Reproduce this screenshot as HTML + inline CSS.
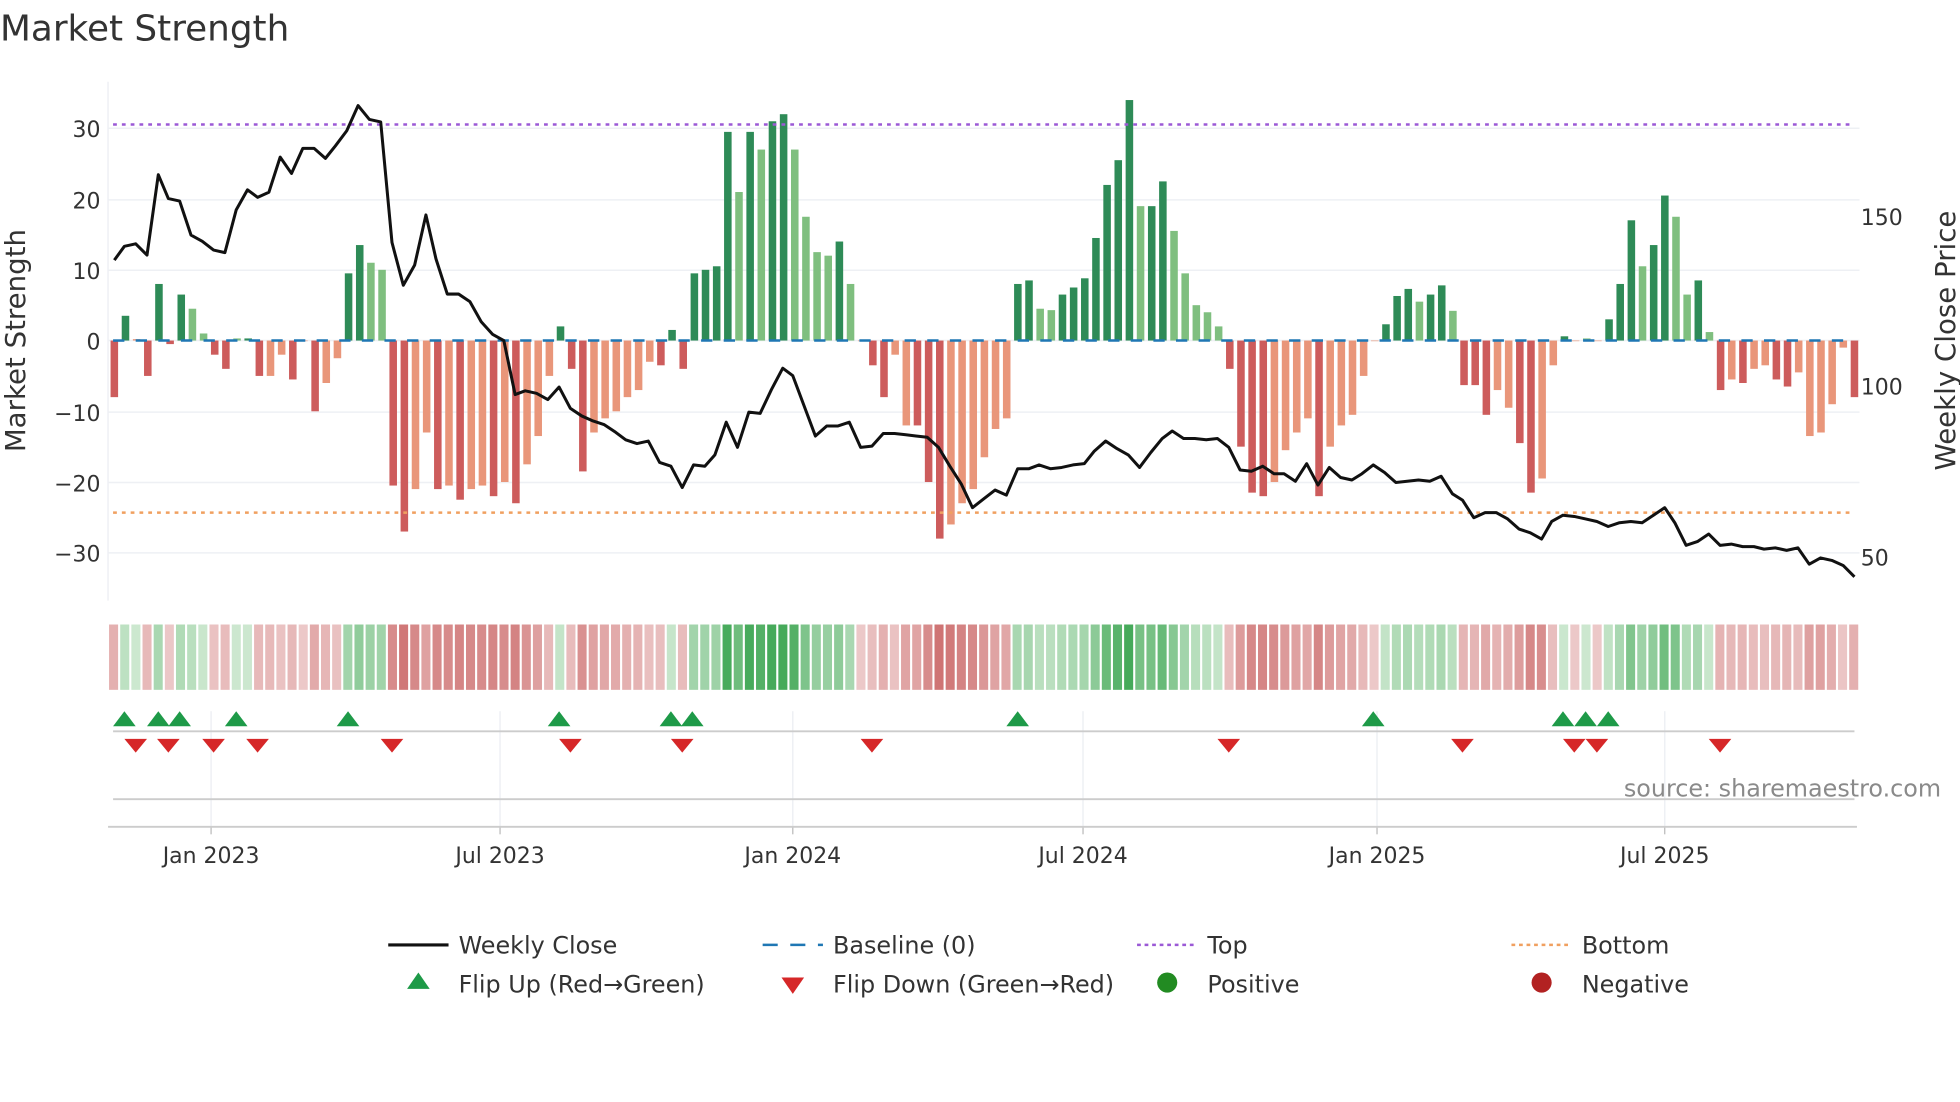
<!DOCTYPE html>
<html><head><meta charset="utf-8"><style>
html,body{margin:0;padding:0;background:#fff;}
svg{display:block;}
text{font-family:"DejaVu Sans","Liberation Sans",sans-serif;fill:#333;}
</style></head><body>
<svg id="s" width="1960" height="1102" viewBox="0 0 1560 877" xmlns="http://www.w3.org/2000/svg">
<rect width="1560" height="877" fill="#fff"/>
<text x="0" y="32" font-size="28.5" fill="#333">Market Strength</text>
<g id="grid"></g>
<g id="bars"></g>
<g id="strip"></g>
<line x1="90" y1="99" x2="1476" y2="99" stroke="#9b59d6" stroke-width="2" stroke-dasharray="3,4"/>
<line x1="90" y1="408" x2="1476" y2="408" stroke="#f0a060" stroke-width="2" stroke-dasharray="3,4"/>
<line x1="90" y1="271" x2="1476" y2="271" stroke="#1f77b4" stroke-width="2" stroke-dasharray="9,9"/>
<polyline id="price" fill="none" stroke="#111" stroke-width="2.4" stroke-linejoin="round"/>
<g id="marks"></g>
<g font-size="17.5">
<text x="80" y="109" text-anchor="end">30</text>
<text x="80" y="166" text-anchor="end">20</text>
<text x="80" y="222" text-anchor="end">10</text>
<text x="80" y="278" text-anchor="end">0</text>
<text x="80" y="335" text-anchor="end">−10</text>
<text x="80" y="391" text-anchor="end">−20</text>
<text x="80" y="447" text-anchor="end">−30</text>
<text x="1481" y="179">150</text>
<text x="1481" y="314">100</text>
<text x="1481" y="450">50</text>
<text x="168" y="687" text-anchor="middle">Jan 2023</text>
<text x="398" y="687" text-anchor="middle">Jul 2023</text>
<text x="631" y="687" text-anchor="middle">Jan 2024</text>
<text x="862" y="687" text-anchor="middle">Jul 2024</text>
<text x="1096" y="687" text-anchor="middle">Jan 2025</text>
<text x="1325" y="687" text-anchor="middle">Jul 2025</text>
</g>
<text transform="translate(20,271) rotate(-90)" text-anchor="middle" font-size="22">Market Strength</text>
<text transform="translate(1556,271) rotate(-90)" text-anchor="middle" font-size="22">Weekly Close Price</text>
<text x="1545" y="634" text-anchor="end" font-size="19" style="fill:#8a8a8a">source: sharemaestro.com</text>
<g font-size="19">
<line x1="309" y1="752" x2="357" y2="752" stroke="#111" stroke-width="2.5"/>
<text x="365" y="759">Weekly Close</text>
<line x1="607" y1="752" x2="655" y2="752" stroke="#1f77b4" stroke-width="2" stroke-dasharray="12,10"/>
<text x="663" y="759">Baseline (0)</text>
<line x1="905" y1="752" x2="953" y2="752" stroke="#9b59d6" stroke-width="2" stroke-dasharray="3,3"/>
<text x="961" y="759">Top</text>
<line x1="1203" y1="752" x2="1251" y2="752" stroke="#f0a060" stroke-width="2" stroke-dasharray="3,3"/>
<text x="1259" y="759">Bottom</text>
<polygon points="333,774 324,787 342,787" fill="#1e9a48"/>
<text x="365" y="790">Flip Up (Red→Green)</text>
<polygon points="622,778 640,778 631,791" fill="#d62728"/>
<text x="663" y="790">Flip Down (Green→Red)</text>
<circle cx="929" cy="782" r="8" fill="#228b22"/>
<text x="961" y="790">Positive</text>
<circle cx="1227" cy="782" r="8" fill="#b22222"/>
<text x="1259" y="790">Negative</text>
</g>
</svg>
<script>
var NS="http://www.w3.org/2000/svg";
function el(p,t,a){var e=document.createElementNS(NS,t);for(var k in a)e.setAttribute(k,a[k]);document.getElementById(p).appendChild(e);return e;}
[102,159,215,271,328,384,440].forEach(function(y){el("grid","line",{x1:86,x2:1480,y1:y,y2:y,stroke:"#eef0f4","stroke-width":1.2});});
el("grid","line",{x1:86,x2:86,y1:65,y2:478,stroke:"#eef0f4","stroke-width":1.2});
[168,398,631,862,1096,1325].forEach(function(x){el("grid","line",{x1:x,x2:x,y1:566,y2:658,stroke:"#eef0f4","stroke-width":1.2});el("grid","line",{x1:x,x2:x,y1:658,y2:664,stroke:"#bbb","stroke-width":1});});
el("grid","line",{x1:90,x2:1476,y1:582,y2:582,stroke:"#ccc","stroke-width":1.5});
el("grid","line",{x1:90,x2:1476,y1:636,y2:636,stroke:"#ccc","stroke-width":1.5});
el("grid","line",{x1:86,x2:1478,y1:658,y2:658,stroke:"#ccc","stroke-width":1.5});
var B="-8R 3.5G 0.2r -5R 8G -0.5R 6.5G 4.5g 1g -2R -4R 0.3g 0.3G -5R -5r -2r -5.5R 0r -10R -6r -2.5r 9.5G 13.5G 11g 10g -20.5R -27R -21r -13r -21R -20.5r -22.5R -21r -20.5r -22R -20r -23R -17.5r -13.5r -5r 2G -4R -18.5R -13r -11r -10r -8r -7r -3r -3.5R 1.5G -4R 9.5G 10G 10.5G 29.5G 21g 29.5G 27g 31G 32G 27g 17.5g 12.5g 12g 14G 8g 0r -3.5R -8R -2r -12r -12R -20R -28R -26r -23r -21r -16.5r -12.5r -11r 8G 8.5G 4.5g 4.3g 6.5G 7.5G 8.8G 14.5G 22G 25.5G 34G 19g 19G 22.5G 15.5g 9.5g 5g 4g 2g -4R -15R -21.5R -22R -20r -15.5r -13r -11r -22R -15r -12r -10.5r -5r 0r 2.3G 6.3G 7.3G 5.5g 6.5G 7.8G 4.2g -6.3R -6.3R -10.5R -7r -9.5r -14.5R -21.5R -19.5r -3.5r 0.6G 0r 0.3g 0r 3G 8G 17G 10.5g 13.5G 20.5G 17.5g 6.5g 8.5G 1.2g -7R -5.5r -6R -4r -3.5r -5.5R -6.5R -4.5r -13.5r -13r -9r -1r -8R".split(" ");
var col={G:"#2e8b57",g:"#7fbf7f",R:"#cd5c5c",r:"#e9967a"};
var n=B.length;
for(var i=0;i<n;i++){
 var v=parseFloat(B[i]),t=B[i].slice(-1),x=91+i*(1385/(n-1));
 var y0=271,y1=271-v*5.63;
 el("bars","rect",{x:x-3,y:Math.min(y0,y1),width:6,height:Math.max(Math.abs(y1-y0),0.5),fill:col[t]});
 var a=Math.min(Math.abs(v)/30,1);var c;
 if(v>=0.2){var l=[205,232,208],d=[70,170,90];c="rgb("+l.map(function(q,j){return Math.round(q+(d[j]-q)*a)}).join(",")+")";}
 else{var l2=[236,200,200],d2=[205,110,110];c="rgb("+l2.map(function(q,j){return Math.round(q+(d2[j]-q)*a)}).join(",")+")";}
 el("strip","rect",{x:x-4.2,y:497,width:7.2,height:52,fill:c});
}
var P=[[91,207],[99,196],[108,194],[117,203],[126,139],[134,158],[143,160],[152,187],[161,192],[170,199],[179,201],[188,167],[197,151],[205,157],[214,153],[223,125],[232,138],[241,118],[250,118],[259,126],[267,116],[276,104],[285,84],[294,95],[303,97],[312,193],[321,227],[330,211],[339,171],[347,206],[356,234],[365,234],[374,240],[383,256],[392,266],[401,271],[410,314],[418,311],[427,313],[436,318],[445,308],[454,325],[463,331],[472,335],[481,338],[490,344],[498,350],[507,353],[516,351],[525,368],[534,371],[543,388],[552,370],[561,371],[569,362],[578,336],[587,356],[596,328],[605,329],[614,310],[623,293],[631,299],[640,323],[649,347],[658,339],[667,339],[676,336],[685,356],[694,355],[703,345],[712,345],[721,346],[729,347],[738,348],[747,356],[756,371],[765,385],[774,404],[783,397],[792,390],[801,394],[810,373],[819,373],[827,370],[836,373],[845,372],[854,370],[863,369],[871,359],[880,351],[889,357],[898,362],[907,372],[916,360],[925,349],[933,343],[942,349],[951,349],[960,350],[969,349],[978,356],[987,374],[996,375],[1005,371],[1014,377],[1022,377],[1031,383],[1040,369],[1049,386],[1058,372],[1067,380],[1076,382],[1084,377],[1093,370],[1102,376],[1111,384],[1120,383],[1129,382],[1138,383],[1147,379],[1156,393],[1164,398],[1173,412],[1182,408],[1191,408],[1200,413],[1209,421],[1218,424],[1227,429],[1235,415],[1244,410],[1253,411],[1262,413],[1271,415],[1280,419],[1289,416],[1298,415],[1307,416],[1316,410],[1325,404],[1333,416],[1342,434],[1351,431],[1360,425],[1369,434],[1378,433],[1387,435],[1396,435],[1404,437],[1413,436],[1422,438],[1431,436],[1440,449],[1449,444],[1458,446],[1467,450],[1476,459]];
document.getElementById("price").setAttribute("points",P.map(function(p){return p.join(",")}).join(" "));
[99,126,143,188,277,445,534,551,810,1093,1244,1262,1280].forEach(function(x){el("marks","polygon",{points:(x)+",566 "+(x-9)+",578 "+(x+9)+",578",fill:"#1e9a48"});});
[108,134,170,205,312,454,543,694,978,1164,1253,1271,1369].forEach(function(x){el("marks","polygon",{points:(x-9)+",588 "+(x+9)+",588 "+x+",599",fill:"#d62728"});});
</script>
</body></html>
